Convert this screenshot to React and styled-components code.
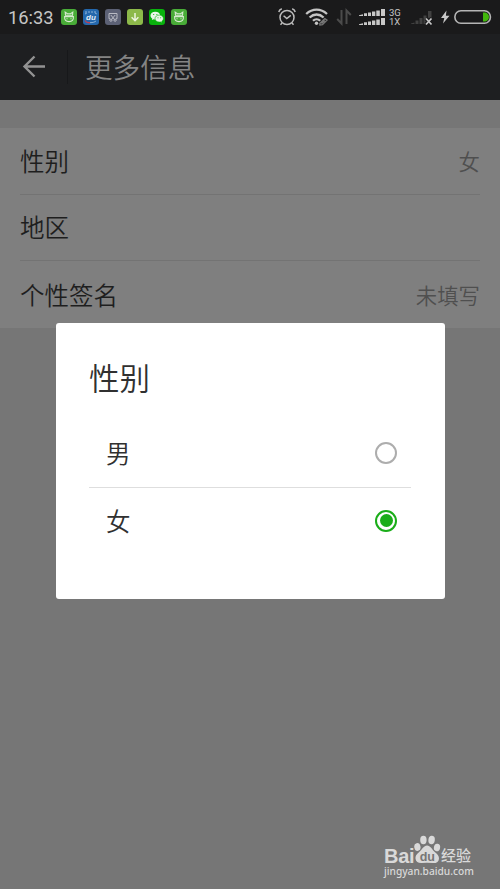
import React, { useState } from 'react';
import styled, { createGlobalStyle } from 'styled-components';

const GlobalStyle = createGlobalStyle`
  * {
    box-sizing: border-box;
  }

  body {
    margin: 0;
    background: #767676;
    font-family: Roboto, 'Noto Sans CJK SC', sans-serif;
  }
`;

const Screen = styled.div`
  position: relative;
  width: 500px;
  height: 889px;
  overflow: hidden;
  background: #767676;
`;

const StatusBar = styled.div`
  display: flex;
  align-items: center;
  height: 34px;
  padding: 0 8px;
  background: #1a1a1b;
  color: #c6c6c6;
`;

const Clock = styled.span`
  width: 53px;
  padding-top: 1px;
  font-size: 18.3px;
  line-height: 34px;
  white-space: nowrap;
`;

const Notifications = styled.div`
  display: flex;
  gap: 6px;
`;

const AppBadge = styled.svg`
  width: 16px;
  height: 16px;
  border-radius: 3px;
  background: ${(props) => props.$color};
`;

const StatusIcons = styled.div`
  display: flex;
  align-items: center;
  margin-left: auto;
`;

const StatusIcon = styled.svg`
  flex: none;
  height: 20px;
  margin-right: ${(props) => props.$gap || 0}px;
`;

const NetworkType = styled.div`
  width: 22px;
  font-size: 9.5px;
  line-height: 9px;
`;

const NetworkLine = styled.div`
  height: 9px;
`;

const Header = styled.header`
  display: flex;
  align-items: center;
  height: 66px;
  padding-left: 22px;
  background: #1e1f21;
`;

const BackButton = styled.button`
  display: flex;
  width: 45px;
  padding: 0;
  border: 0;
  background: none;
`;

const HeaderDivider = styled.div`
  width: 1px;
  height: 34px;
  margin-right: 17px;
  background: #17181a;
`;

const PageTitle = styled.h1`
  margin: 0;
  padding-top: 3px;
  color: #848484;
  font-size: 27.6px;
  font-weight: 350;
  line-height: 40px;
`;

const List = styled.ul`
  list-style: none;
  height: 200px;
  margin: 28px 0 0;
  padding: 0 20px;
  background: #7f7f7f;
`;

const ListItem = styled.li`
  display: flex;
  align-items: center;
  justify-content: space-between;
  height: 66.67px;
  padding-top: 4px;
  border-bottom: 1px solid #737373;

  &:last-child {
    border-bottom: 0;
  }
`;

const Label = styled.span`
  color: #1e1e1e;
  font-size: 24.5px;
  font-weight: 350;
  line-height: 36px;
`;

const Value = styled.span`
  color: #4f4f4f;
  font-size: 21.4px;
  font-weight: 350;
  line-height: 32px;
`;

const Dialog = styled.div`
  position: absolute;
  top: 322.7px;
  left: 55.5px;
  width: 389px;
  height: 276px;
  padding: 34px 33.5px 0;
  border-radius: 3px;
  background: #fff;
`;

const DialogTitle = styled.h2`
  height: 62.3px;
  margin: 0;
  color: #303030;
  font-size: 30.5px;
  font-weight: 350;
  line-height: 45px;
`;

const Option = styled.div`
  display: flex;
  align-items: center;
  justify-content: space-between;
  height: 68px;
  padding: 0 14px 0 17px;
  color: #303030;
  font-size: 24.5px;
  font-weight: 350;
  line-height: 36px;
  cursor: pointer;

  & + & {
    height: 67px;
    border-top: 1px solid #dedede;
  }
`;

const OptionLabel = styled.span`
  padding-top: 4px;
`;

const Radio = styled.span`
  display: flex;
  align-items: center;
  justify-content: center;
  width: 22px;
  height: 22px;
  border: 2px solid ${(props) => (props.$checked ? '#1aad19' : '#adadad')};
  border-radius: 50%;

  &::after {
    content: '';
    width: 13px;
    height: 13px;
    border-radius: 50%;
    background: ${(props) => (props.$checked ? '#1aad19' : 'transparent')};
  }
`;

const Watermark = styled.div`
  position: absolute;
  left: 384px;
  top: 834px;
  width: 90px;
  color: #d9d9d9;
`;

const WatermarkLogo = styled.div`
  display: flex;
  align-items: flex-end;
  height: 30px;
`;

const LogoText = styled.span`
  width: 30px;
  font-family: 'Liberation Sans', sans-serif;
  font-size: 20px;
  font-weight: 700;
  line-height: 15px;
  letter-spacing: -0.3px;
`;

const LogoChinese = styled.span`
  font-size: 15px;
  font-weight: 500;
  line-height: 15px;
  white-space: nowrap;
`;

const WatermarkUrl = styled.div`
  font-family: 'Noto Sans', sans-serif;
  font-size: 10.2px;
  font-weight: 500;
  line-height: 14px;
  white-space: nowrap;
`;

const CatBadge = () => (
  <AppBadge $color="#49ac38" viewBox="0 0 16 16" fill="none" stroke="#d8ead2" strokeWidth="1.1">
    <path d="M4.5 6.800 4.200 3.200l2.200 1.500h3.200l2.200-1.500-.3 3.600M3.600 7.600h8.800c.3 3.400-1.300 5-4.400 5s-4.700-1.600-4.400-5z" />
    <path d="M4.500 6.200h7M6 9.200v1M10 9.200v1" />
  </AppBadge>
);

const DuBadge = () => (
  <AppBadge $color="#2468ad" viewBox="0 0 16 16">
    <path d="M2 3h12M2 5l2-1M12 4l2 1" stroke="#8db2d8" strokeDasharray="2 1" />
    <text x="3" y="11" fill="#e4edf6" fontFamily="Liberation Sans" fontSize="8" fontWeight="700" fontStyle="italic">du</text>
    <path d="M2 11.500c1 1.900 3 2.400 5 2.200" fill="none" stroke="#bd4052" strokeWidth="1.3" />
    <path d="M7 13.700c3 0 5-.7 6-1.800" fill="none" stroke="#8db2d8" />
  </AppBadge>
);

const CutBadge = () => (
  <AppBadge $color="#5c6175" viewBox="0 0 16 16" fill="none" stroke="#b9bbc4">
    <path d="M5 9.700H4V4.500h8v5.200h-1M5.800 6l3.700 4.500M10.200 6l-3.700 4.500" />
    <circle cx="5.9" cy="11.2" r="1.1" />
    <circle cx="10.1" cy="11.2" r="1.1" />
  </AppBadge>
);

const DownloadBadge = () => (
  <AppBadge $color="#8db94a" viewBox="0 0 16 16" fill="none" stroke="#edf4df" strokeWidth="1.5">
    <path d="M8 4V12M4.600 8.200 8 11.700l3.400-3.500" />
  </AppBadge>
);

const WechatBadge = () => (
  <AppBadge $color="#09b20d" viewBox="0 0 16 16">
    <path d="M6.3 2.7C3.5 2.7 1.5 4.4 1.5 6.6c0 1.3.7 2.3 1.7 3l-.3 1.5 1.8-.9c.5.1 1 .2 1.6.2 2.8 0 4.9-1.7 4.9-3.8 0-2.2-2.1-3.9-4.9-3.9z" fill="#e9f5e7" />
    <path d="M10.3 6.1c-2.5 0-4.3 1.5-4.3 3.5s1.8 3.5 4.3 3.5l1.3-.2 1.500.8-.3-1.400c1-.6 1.600-1.600 1.600-2.700 0-2-1.800-3.500-4.100-3.500z" fill="#e9f5e7" stroke="#09b20d" strokeWidth=".6" />
    <circle cx="4.7" cy="5.5" r=".6" fill="#09b20d" />
    <circle cx="7.9" cy="5.5" r=".6" fill="#09b20d" />
    <circle cx="9" cy="8.7" r=".5" fill="#09b20d" />
    <circle cx="11.7" cy="8.7" r=".5" fill="#09b20d" />
  </AppBadge>
);

const AlarmIcon = () => (
  <StatusIcon width="20" viewBox="0 0 20 20" $gap={8} fill="none" stroke="#bcbcbc" strokeWidth="1.5">
    <circle cx="10" cy="10.5" r="7" />
    <path d="M6.6 8.7 9.8 11.5l4-3.2M1.8 5c.3-1.7 1.4-2.8 3-3.3M18.2 5c-.3-1.7-1.4-2.8-3-3.3M5 16l-1.500 1.700M15 16l1.500 1.700" />
  </StatusIcon>
);

const WifiIcon = () => (
  <StatusIcon width="24" viewBox="0 0 24 20" $gap={7} fill="none" stroke="#c4c4c4" strokeWidth="2.3">
    <path d="M1.2 7c6.2-5.8 14.6-5.8 20.800 0M4.600 10.500c4.200-4 9.800-4 14 0M8 13.800c2-2 5.200-2 7.200 0" />
    <circle cx="11.5" cy="16.3" r="1.7" fill="#c4c4c4" stroke="none" />
    <path d="m14.8 16.500 5-4.800 2.200 1.500-4.500 4.500-2.600.4zM16.500 16.500l3.300-3" stroke="#777" strokeWidth="1.3" />
  </StatusIcon>
);

const DataIcon = () => (
  <StatusIcon width="16" viewBox="0 0 16 20" $gap={7} fill="none" stroke="#4b4b4b" strokeWidth="2">
    <path d="M5.500 3v13.500L1.200 12M10.500 17V3.500L14.800 8" />
  </StatusIcon>
);

const DualSignalIcon = () => (
  <StatusIcon width="27" viewBox="0 0 27 20" $gap={3} fill="#c8c8c8">
    <path d="M0 9h4V7.300L0 8.200zM5 9h3V6.300H5zM9 9h3V5.500H9zM13 9h3.300V4.500H13zM17.300 9h3.500V3.500h-3.500zM22 9h4V2h-4z" />
    <path d="M0 18h4v-1.700l-4 .9zM5 18h3v-2.700H5zM9 18h3v-3.500H9zM13 18h3.300v-4.500H13zM17.300 18h3.500v-5.500h-3.500zM22 18h4v-7h-4z" />
  </StatusIcon>
);

const NoSignalIcon = () => (
  <StatusIcon width="22" viewBox="0 0 22 20" $gap={8}>
    <path d="M0 17h3.500v-1.500L0 16.500zM4.500 17h3v-3.500h-3zM8.500 17h3v-6h-3zM12.500 17h3V8.500h-3zM17 17h3.500V4H17z" fill="#414141" />
    <path d="m15 11.500 5.800 6M20.800 11.500l-5.800 6" stroke="#1a1a1b" strokeWidth="4" />
    <path d="m15 11.500 5.500 6M20.500 11.500l-5.500 6" stroke="#c8c8c8" strokeWidth="1.7" />
  </StatusIcon>
);

const BoltIcon = () => (
  <StatusIcon width="9" viewBox="0 0 9 20" $gap={4} fill="#c8c8c8">
    <path d="M5.500 3.500 0 11h3.300L2 16.500 8.500 8.800H4.900z" />
  </StatusIcon>
);

const BatteryIcon = () => (
  <StatusIcon width="38" viewBox="0 0 38 20" fill="none">
    <rect x=".9" y="3.800" width="35.5" height="12.400" rx="6" stroke="#b5b5b5" strokeWidth="1.6" />
    <path d="M29 5.500h2.500c4.600 1 4.600 8 0 9H29z" fill="#42b70c" />
  </StatusIcon>
);

const PawIcon = () => (
  <svg width="27" height="30" viewBox="0 0 27 30" fill="#d9d9d9">
    <ellipse cx="3.400" cy="13" rx="3.100" ry="3.900" transform="rotate(-12 3.400 13)" />
    <ellipse cx="9.400" cy="6" rx="3.200" ry="4.200" />
    <ellipse cx="17.600" cy="6" rx="3.200" ry="4.200" transform="rotate(8 17.600 6)" />
    <ellipse cx="23" cy="13.500" rx="3.100" ry="3.800" transform="rotate(12 23 13.500)" />
    <path d="M13 11.500c-3.200 0-4.800 4-7.800 6.400C2.300 20.200 1.200 22.200 1.500 24.800c.4 3.200 3 4.500 6.200 4.300l5.300-.4 5.800.4c3.800.2 6.100-1.600 6.200-4.700.1-2.700-1.700-4.200-4.200-6.500C18 15.500 16.500 11.500 13 11.500z" />
    <text x="5.700" y="26.500" fill="#767676" fontFamily="Liberation Sans" fontSize="12.5" fontWeight="700">du</text>
  </svg>
);

const rows = [
  { label: '性别', value: '女' },
  { label: '地区', value: '' },
  { label: '个性签名', value: '未填写' },
];

const App = () => {
  const [gender, setGender] = useState('女');

  return (
    <Screen>
      <GlobalStyle />
      <StatusBar>
        <Clock>16:33</Clock>
        <Notifications>
          <CatBadge />
          <DuBadge />
          <CutBadge />
          <DownloadBadge />
          <WechatBadge />
          <CatBadge />
        </Notifications>
        <StatusIcons>
          <AlarmIcon />
          <WifiIcon />
          <DataIcon />
          <DualSignalIcon />
          <NetworkType>
            <NetworkLine>3G</NetworkLine>
            <NetworkLine>1X</NetworkLine>
          </NetworkType>
          <NoSignalIcon />
          <BoltIcon />
          <BatteryIcon />
        </StatusIcons>
      </StatusBar>

      <Header>
        <BackButton>
          <svg width="24" height="24" viewBox="0 0 24 24" fill="none" stroke="#929292" strokeWidth="2.4">
            <path d="M23 11.500H2.500M12.500 1.500 2.500 11.500 12.500 21.500" />
          </svg>
        </BackButton>
        <HeaderDivider />
        <PageTitle>更多信息</PageTitle>
      </Header>

      <List>
        {rows.map((row) => (
          <ListItem key={row.label}>
            <Label>{row.label}</Label>
            <Value>{row.value}</Value>
          </ListItem>
        ))}
      </List>

      <Dialog>
        <DialogTitle>性别</DialogTitle>
        {['男', '女'].map((name) => (
          <Option key={name} onClick={() => setGender(name)}>
            <OptionLabel>{name}</OptionLabel>
            <Radio $checked={gender === name} />
          </Option>
        ))}
      </Dialog>

      <Watermark>
        <WatermarkLogo>
          <LogoText>Bai</LogoText>
          <PawIcon />
          <LogoChinese>经验</LogoChinese>
        </WatermarkLogo>
        <WatermarkUrl>jingyan.baidu.com</WatermarkUrl>
      </Watermark>
    </Screen>
  );
};

export default App;
